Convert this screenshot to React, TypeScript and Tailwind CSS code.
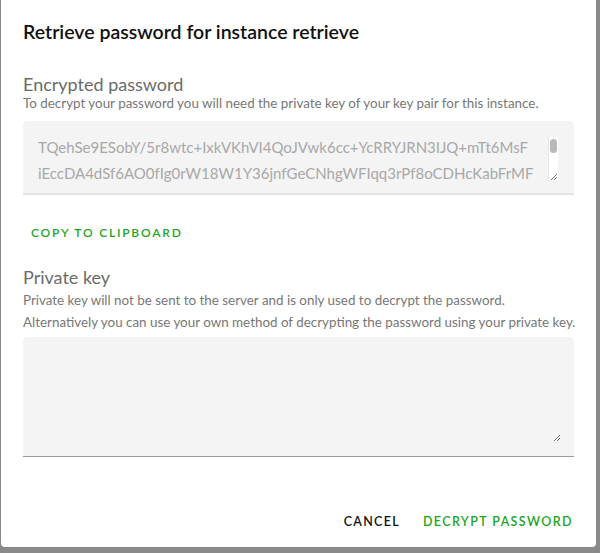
import { useState } from 'react'

const encrypted = [
  'TQehSe9ESobY/5r8wtc+IxkVKhVI4QoJVwk6cc+YcRRYJRN3IJQ+mTt6MsF',
  'iEccDA4dSf6AO0fIg0rW18W1Y36jnfGeCNhgWFIqq3rPf8oCDHcKabFrMF',
]

function ResizeGrip({ className }: { className: string }) {
  return (
    <svg width="8" height="8" viewBox="0 0 8 8" className={`absolute ${className}`}>
      <path d="M7 1 L1 7 M7 4 L4 7" stroke="#777" strokeWidth="1" />
    </svg>
  )
}

export default function App() {
  const [privateKey, setPrivateKey] = useState('')

  return (
    <div className="h-[553px] w-[600px] bg-[#8a8a8a] font-['Lato','Liberation_Sans',sans-serif]">
      <div className="ml-px flex h-[547px] w-[595px] flex-col rounded-b-[4px] bg-white px-[22px]">
        {/* Header */}
        <h2 className="mt-[22px] text-[19.5px] leading-[20px] font-semibold text-[#111]">
          Retrieve password for instance retrieve
        </h2>

        {/* Encrypted password */}
        <h3 className="mt-[32px] text-[18px] leading-[20px] text-[#6b6b6b]">Encrypted password</h3>
        <p className="mt-px text-[13.4px] leading-[16px] whitespace-nowrap text-[#777]">
          To decrypt your password you will need the private key of your key pair for this instance.
        </p>
        <div className="relative mt-[10px] h-[74px] overflow-hidden rounded-t-[4px] border-b-2 border-[#e4e4e4] bg-[#f4f4f4] pl-[15px] pt-[13px]">
          {encrypted.map((line, i) => (
            <div key={i} className="text-[15px] leading-[26px] whitespace-nowrap text-[#a8a8a8]">
              {line}
            </div>
          ))}
          <div className="absolute top-[16px] right-[16px] h-[44px] w-[10px] border-l border-[#e6e6e6] bg-white">
            <div className="mx-auto mt-[2px] h-[14px] w-[7px] rounded-full bg-[#b8b8b8]" />
            <ResizeGrip className="bottom-0 right-0" />
          </div>
        </div>

        <button className="mt-[30px] self-start pl-[8px] text-[12px] leading-[16px] font-semibold tracking-[1.8px] text-[#1ea51e]">
          COPY TO CLIPBOARD
        </button>

        {/* Private key */}
        <h3 className="mt-[26px] text-[18px] leading-[20px] text-[#6b6b6b]">Private key</h3>
        <p className="mt-[5px] text-[13.4px] leading-[16px] whitespace-nowrap text-[#777]">
          Private key will not be sent to the server and is only used to decrypt the password.
        </p>
        <p className="mt-[6px] text-[13.4px] leading-[16px] whitespace-nowrap text-[#777]">
          Alternatively you can use your own method of decrypting the password using your private key.
        </p>
        <div className="relative mt-[7px] h-[120px] rounded-t-[4px] border-b border-[#9a9a9a] bg-[#f4f4f4]">
          <textarea
            value={privateKey}
            onChange={(e) => setPrivateKey(e.target.value)}
            className="h-full w-full resize-none bg-transparent px-[15px] py-[13px] text-[14px] outline-none"
          />
          <ResizeGrip className="bottom-[14px] right-[13px]" />
        </div>

        {/* Actions */}
        <div className="mt-auto mb-[17px] flex justify-end gap-[23px] pr-px">
          <button className="text-[12.5px] leading-[16px] font-semibold tracking-[1.3px] text-[#111]">CANCEL</button>
          <button className="text-[12.5px] leading-[16px] font-semibold tracking-[1.4px] text-[#1ea51e]">
            DECRYPT PASSWORD
          </button>
        </div>
      </div>
    </div>
  )
}
